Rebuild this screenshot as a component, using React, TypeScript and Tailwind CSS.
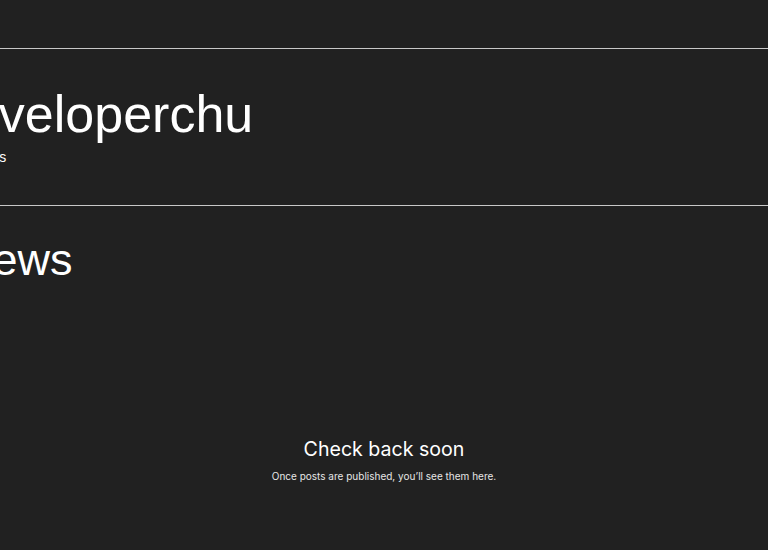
export default function App() {
  return (
    <div className="w-full h-[550px] overflow-hidden bg-[#212121] text-white flex flex-col">
      {/* top bar area */}
      <div className="h-[48px] shrink-0" />
      <div className="h-px bg-[#c8c8c8] shrink-0" />

      {/* blog header */}
      <div className="h-[156px] shrink-0 pt-[39px]">
        <div className="ml-[-59px]">
          <h1 className="text-[52px] leading-none font-['Liberation_Sans',Arial,sans-serif] whitespace-nowrap">
            developerchu
          </h1>
          <p className="mt-[7px] text-[14px] leading-5 font-['Liberation_Sans',Arial,sans-serif] whitespace-nowrap">
            Blog posts
          </p>
        </div>
      </div>
      <div className="h-px bg-[#c8c8c8] shrink-0" />

      {/* feed */}
      <div className="flex-1 flex flex-col">
        <h2 className="mt-[31px] ml-[-40px] text-[45px] leading-none font-['Liberation_Sans',Arial,sans-serif] whitespace-nowrap">
          News
        </h2>
        <div className="mt-[153px] flex flex-col items-center font-['Inter',sans-serif]">
          <h3 className="text-[19.6px] leading-7 text-white">Check back soon</h3>
          <p className="mt-[5px] text-[10px] leading-4 text-[#e6e6e6]">
            Once posts are published, you’ll see them here.
          </p>
        </div>
      </div>
    </div>
  )
}
